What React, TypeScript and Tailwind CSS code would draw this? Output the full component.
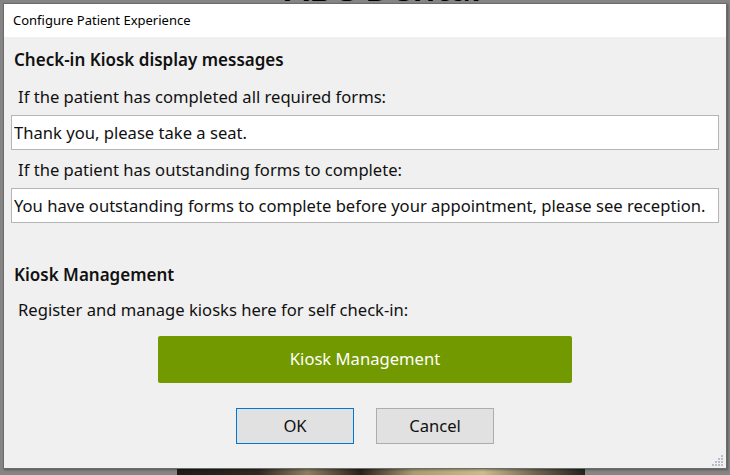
import React, { useState } from 'react';

const font = { fontFamily: '"Noto Sans", "Open Sans", sans-serif' };

const App: React.FC = () => {
  const [done, setDone] = useState('Thank you, please take a seat.');
  const [outstanding, setOutstanding] = useState(
    'You have outstanding forms to complete before your appointment, please see reception.'
  );

  return (
    <div className="relative w-[730px] h-[475px] overflow-hidden bg-[#858585]" style={font}>
      {/* page behind the dialog, only a sliver shows above it */}
      <div className="absolute left-0 right-0 top-0 h-[3px] overflow-hidden">
        <div className="-mt-[32px] pl-[36px] text-center text-[36px] leading-[40px] font-semibold text-black">
          ABC Dental
        </div>
      </div>
      <div className="absolute left-[177px] top-[468px] w-[408px] h-[7px] bg-[linear-gradient(90deg,#1c1c18,#2e2a22_20%,#8c8060_32%,#26221b_45%,#a89c70_58%,#c9bd8c_75%,#6c6450_88%,#1f261c)]" />

      {/* dialog */}
      <div className="absolute z-10 left-[3px] top-[3px] w-[724px] h-[466px] flex flex-col border border-[#6c6c6c] bg-[#f0f0f0] shadow-[1px_1px_2px_rgba(0,0,0,0.35)]">
        <div className="h-[33px] shrink-0 bg-white flex items-center pl-[9px] text-[13px] text-black">
          Configure Patient Experience
        </div>

        <div className="relative flex-1 flex flex-col text-[#111]">
          <div className="mt-[11px] pl-[10px] h-[24px] leading-[24px] text-[17px] font-semibold">
            Check-in Kiosk display messages
          </div>
          <div className="mt-[14px] pl-[14px] h-[22px] leading-[22px] text-[16.6px]">
            If the patient has completed all required forms:
          </div>
          <input
            value={done}
            onChange={(e) => setDone(e.target.value)}
            className="mt-[7px] ml-[7px] mr-[7px] h-[35px] px-[2px] bg-white border border-[#b5b5b5] text-[16.6px] text-[#111] outline-none"
            style={font}
          />
          <div className="mt-[9px] pl-[14px] h-[22px] leading-[22px] text-[16.6px]">
            If the patient has outstanding forms to complete:
          </div>
          <input
            value={outstanding}
            onChange={(e) => setOutstanding(e.target.value)}
            className="mt-[7px] ml-[7px] mr-[7px] h-[35px] px-[2px] bg-white border border-[#b5b5b5] text-[16.6px] text-[#111] outline-none"
            style={font}
          />

          <div className="mt-[40px] pl-[10px] h-[24px] leading-[24px] text-[17px] font-semibold">
            Kiosk Management
          </div>
          <div className="mt-[12px] pl-[14px] h-[22px] leading-[22px] text-[16.6px]">
            Register and manage kiosks here for self check-in:
          </div>

          <div className="mt-[15px] flex justify-center">
            <button className="w-[414px] h-[47px] rounded-[2px] bg-[#729a00] text-white text-[16.6px]" style={font}>
              Kiosk Management
            </button>
          </div>

          <div className="mt-[25px] flex justify-center gap-[22px]">
            <button className="w-[118px] h-[36px] bg-[#e1e1e1] border border-[#0078d7] text-[16.6px] text-[#111]" style={font}>
              OK
            </button>
            <button className="w-[118px] h-[36px] bg-[#e1e1e1] border border-[#adadad] text-[16.6px] text-[#111]" style={font}>
              Cancel
            </button>
          </div>

          {/* resize grip */}
          <svg className="absolute right-[2px] bottom-[2px]" width="12" height="12" viewBox="0 0 12 12">
            {[[10, 2], [10, 5], [7, 5], [10, 8], [7, 8], [4, 8], [10, 11], [7, 11], [4, 11], [1, 11]].map(([x, y], i) => (
              <rect key={i} x={x - 1} y={y - 1} width="2" height="2" fill="#b8bccb" />
            ))}
          </svg>
        </div>
      </div>
    </div>
  );
};

export default App;
